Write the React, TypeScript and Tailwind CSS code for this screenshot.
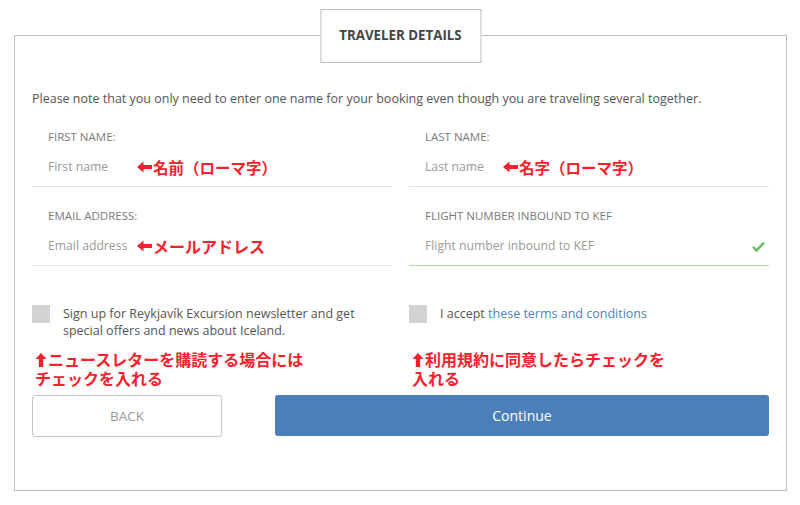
import React from "react";

const Arrow = ({ dir }: { dir: "left" | "up" }) =>
  dir === "left" ? (
    <svg width="15" height="12" viewBox="0 0 15 12" className="inline-block mr-[1px] shrink-0">
      <path d="M0 6 L6.5 0.5 L6.5 3.9 L15 3.9 L15 8.1 L6.5 8.1 L6.5 11.5 Z" fill="#f5222d" />
    </svg>
  ) : (
    <svg width="12" height="14" viewBox="0 0 12 14" className="inline-block mr-[1px] shrink-0 align-[-1px]">
      <path d="M6 0 L11.5 6 L8.2 6 L8.2 14 L3.8 14 L3.8 6 L0.5 6 Z" fill="#f5222d" />
    </svg>
  );

const jp = "font-['Noto_Sans_CJK_JP',sans-serif] font-bold text-[#f5222d]";

function Field({
  label,
  placeholder,
  note,
  noteSize,
  phWidth,
  valid,
}: {
  label: string;
  placeholder: string;
  note?: string;
  noteSize?: string;
  phWidth?: string;
  valid?: boolean;
}) {
  return (
    <div className={`border-b ${valid ? "border-[#a9dfa0]" : "border-[#e2e2e2]"} pb-[9px]`}>
      <div className="pl-4 h-4 leading-4 text-[11.5px] text-[#7a7a7a] uppercase">{label}</div>
      <div className="pl-4 mt-3 h-5 flex items-center">
        <span className={`text-[12.2px] text-[#9a9a9a] shrink-0 ${phWidth ?? ""}`}>{placeholder}</span>
        {note && (
          <span className={`${jp} ${noteSize ?? "text-[15.5px]"} leading-5 flex items-center`}>
            <Arrow dir="left" />
            {note}
          </span>
        )}
        {valid && (
          <svg width="13" height="11" viewBox="0 0 13 11" className="ml-auto mr-[4px]">
            <path d="M1 6 L4.5 9.5 L12 1.5" stroke="#5fbf55" strokeWidth="2.4" fill="none" />
          </svg>
        )}
      </div>
    </div>
  );
}

export default function App() {
  return (
    <div className="w-[800px] h-[505px] bg-white font-['Open_Sans',sans-serif] pt-[35px] pl-[14px]">
      <div className="relative w-[773px] border border-[#bdbdbd] pt-[54px] px-[17px] pb-[53px]">
        <div className="absolute left-1/2 -translate-x-1/2 -top-[27px] w-[161px] h-[54px] bg-white border border-[#bdbdbd] flex items-center justify-center">
          <span className="text-[13.3px] font-bold text-[#444]">TRAVELER DETAILS</span>
        </div>

        <p className="text-[12.5px] leading-[18px] text-[#555]">
          Please note that you only need to enter one name for your booking even though you are traveling several together.
        </p>

        <div className="grid grid-cols-2 gap-x-[17px] gap-y-[21px] mt-[21px]">
          <Field label="First name:" placeholder="First name" note="名前（ローマ字）" phWidth="w-[89px]" />
          <Field label="Last name:" placeholder="Last name" note="名字（ローマ字）" phWidth="w-[78px]" />
          <Field
            label="Email address:"
            placeholder="Email address"
            note="メールアドレス"
            noteSize="text-[16px]"
            phWidth="w-[89px]"
          />
          <Field label="Flight number inbound to KEF" placeholder="Flight number inbound to KEF" valid />
        </div>

        <div className="grid grid-cols-2 gap-x-[17px] mt-[39px]">
          <div className="flex items-start">
            <div className="w-[18px] h-[18px] bg-[#d3d3d3] shrink-0" />
            <div className="ml-[13px] text-[12.5px] leading-[17px] text-[#555]">
              Sign up for Reykjavík Excursion newsletter and get
              <br />
              special offers and news about Iceland.
            </div>
          </div>
          <div className="flex items-start">
            <div className="w-[18px] h-[18px] bg-[#d3d3d3] shrink-0" />
            <div className="ml-[13px] text-[12.5px] leading-[17px] text-[#555]">
              I accept <span className="text-[#4f81bd]">these terms and conditions</span>
            </div>
          </div>
        </div>

        <div className="grid grid-cols-2 gap-x-[17px] mt-[11px]">
          <div className={`${jp} text-[16px] leading-[19px] pl-[3px]`}>
            <Arrow dir="up" />
            ニュースレターを購読する場合には
            <br />
            チェックを入れる
          </div>
          <div className={`${jp} text-[16px] leading-[19px] pl-[3px]`}>
            <Arrow dir="up" />
            利用規約に同意したらチェックを
            <br />
            入れる
          </div>
        </div>

        <div className="flex mt-[7px] gap-[53px]">
          <button className="w-[190px] h-[42px] border border-[#c8c8c8] rounded-[3px] text-[13.5px] text-[#999] bg-white">
            BACK
          </button>
          <button className="flex-1 h-[41px] rounded-[3px] bg-[#4a7fba] text-white text-[14px]">
            Continue
          </button>
        </div>
      </div>
    </div>
  );
}
